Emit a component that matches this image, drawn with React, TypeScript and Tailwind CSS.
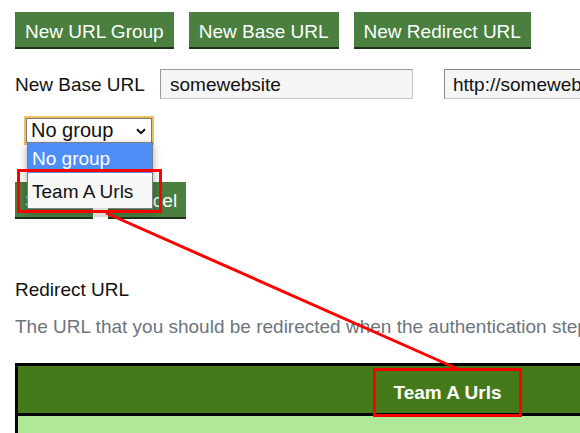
const greenBtn =
  "h-[37px] px-[10px] pt-[3px] bg-[#4a7f40] text-white border-b-2 border-[#1c3318] leading-none whitespace-nowrap"

export default function App() {
  return (
    <div className="relative w-[580px] h-[433px] overflow-hidden bg-white text-[19px] text-[#111] font-['Liberation_Sans',Arial,sans-serif]">
      <div className="pl-[15px] pt-[12px]">
        {/* top actions */}
        <div className="flex gap-[15px]">
          <button type="button" className={greenBtn}>New URL Group</button>
          <button type="button" className={greenBtn}>New Base URL</button>
          <button type="button" className={greenBtn}>New Redirect URL</button>
        </div>

        {/* new base url form */}
        <div className="mt-[20px] flex items-center whitespace-nowrap">
          <span className="w-[145px] shrink-0 pt-[2px]">New Base URL</span>
          <div className="w-[253px] h-[30px] shrink-0 flex items-center px-[9px] pt-[2px] bg-[#f5f5f5] border border-[#c8c8c8] border-l-[#999] border-t-[#999]">
            somewebsite
          </div>
          <div className="ml-[31px] w-[253px] h-[30px] shrink-0 flex items-center px-[8px] pt-[2px] bg-[#f5f5f5] border border-[#c8c8c8] border-l-[#888] border-t-[#888]">
            http://somewebsite.com
          </div>
        </div>

        {/* group select */}
        <div className="mt-[16px] ml-[9px] w-[130px] h-[29px] border-2 border-[#efbf5c]">
          <div className="h-full flex items-center justify-between pl-[4px] pr-[5px] bg-white border border-[#7a7a7a]">
            <span className="leading-none text-[20px]">No group</span>
            <svg width="10" height="7" viewBox="0 0 10 7" className="mt-[2px]">
              <path d="M1 1.2 L5 5.2 L9 1.2" fill="none" stroke="#111" strokeWidth="2" />
            </svg>
          </div>
        </div>

        <div className="mt-[37px] flex gap-[15px]">
          <button type="button" className={`${greenBtn} w-[78px] text-left`}>Submit</button>
          <button type="button" className={`${greenBtn} w-[78px] text-center`}>Cancel</button>
        </div>

        <p className="mt-[60px] leading-[22px]">Redirect URL</p>
        <p className="mt-[15px] leading-[22px] text-[#6c757d] whitespace-nowrap">
          The URL that you should be redirected when the authentication step is complete
        </p>

        <div className="mt-[25px] w-[900px] border-[3px] border-black">
          <div className="flex h-[47px] bg-[#457a1b] text-white font-bold">
            <div className="w-[355px]" />
            <div className="w-[149px] flex items-center justify-center pt-[9px]">Team A Urls</div>
          </div>
          <div className="h-[60px] border-t-[3px] border-black bg-[#b0e89a]" />
        </div>
      </div>

      {/* open select dropdown */}
      <div className="absolute left-[27px] top-[142px] w-[126px] border border-[#7d7d7d] bg-[#f7f7f7] shadow-[0_3px_8px_rgba(0,0,0,0.35)]">
        <div className="h-[30px] flex items-center pl-[4px] pt-[3px] bg-[#4f8ef7] text-white">No group</div>
        <div className="h-[3px] bg-white" />
        <div className="h-[32px] flex items-center pl-[4px]">Team A Urls</div>
      </div>
      <div className="absolute left-[93px] top-[208px] w-[15px] h-[9px] bg-[#dcdcdc]" />

      {/* annotation */}
      <div className="absolute left-[17px] top-[169px] w-[145px] h-[44px] border-[3px] border-[#ff0000]" />
      <div className="absolute left-[373px] top-[368px] w-[149px] h-[49px] border-[3px] border-[#ff0000]" />
      <svg className="absolute left-0 top-0 pointer-events-none" width="580" height="433">
        <line x1="106" y1="213" x2="458" y2="369" stroke="#ff0000" strokeWidth="3" />
      </svg>
    </div>
  )
}
